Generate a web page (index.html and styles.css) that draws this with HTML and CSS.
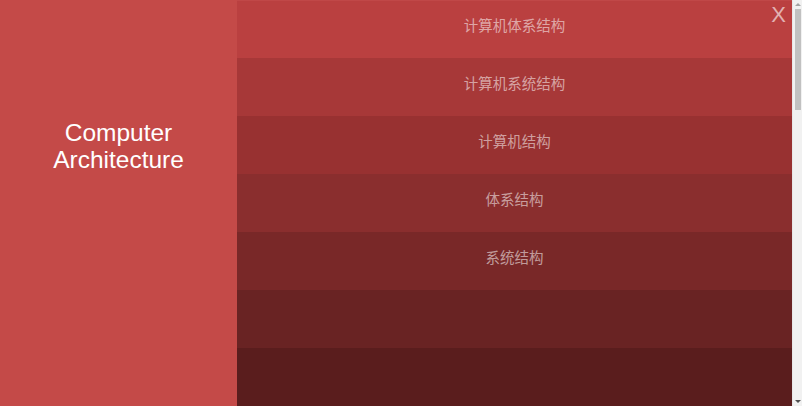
FILE: index.html
```html
<!DOCTYPE html>
<html lang="zh">
<head>
<meta charset="utf-8">
<title>Computer Architecture</title>
<link rel="stylesheet" href="styles.css">
</head>
<body>
<div class="page">
  <aside class="side">
    <h1 class="title">Computer<br>Architecture</h1>
  </aside>
  <main class="list">
    <button class="close">X</button>
    <div class="row r1">计算机体系结构</div>
    <div class="row r2">计算机系统结构</div>
    <div class="row r3">计算机结构</div>
    <div class="row r4">体系结构</div>
    <div class="row r5">系统结构</div>
    <div class="row r6"></div>
    <div class="row r7"></div>
  </main>
  <div class="scrollbar">
    <span class="arrow up"></span>
    <div class="track"><div class="thumb"></div></div>
    <span class="arrow down"></span>
  </div>
</div>
</body>
</html>
```

FILE: styles.css
```css
html, body {
  margin: 0;
  padding: 0;
  overflow: hidden;
}
body {
  font-family: "Liberation Sans", "Noto Sans CJK SC", sans-serif;
  background: #5a1d1d;
}
.page {
  display: flex;
  height: 100vh;
  overflow: hidden;
}
.side {
  width: 237px;
  flex: 0 0 237px;
  background: #c44a48;
  display: flex;
  justify-content: center;
  padding-top: 119px;
  box-sizing: border-box;
}
.title {
  margin: 0;
  color: #ffffff;
  font-weight: normal;
  font-size: 24.5px;
  line-height: 27px;
  text-align: center;
}
.list {
  flex: 1;
  position: relative;
  display: flex;
  flex-direction: column;
  overflow: hidden;
}
.close {
  position: absolute;
  top: 2px;
  right: 6px;
  background: none;
  border: 0;
  padding: 0;
  font-family: "Liberation Sans", sans-serif;
  font-size: 22px;
  line-height: 26px;
  color: rgba(255, 255, 255, 0.6);
  cursor: pointer;
}
.row {
  height: 58px;
  flex: 0 0 58px;
  box-sizing: border-box;
  padding-top: 15px;
  line-height: 20px;
  font-size: 14.5px;
  text-align: center;
  color: rgba(255, 255, 255, 0.55);
  font-family: "Noto Sans CJK SC", "Liberation Sans", sans-serif;
}
.r1 { background: #ba4040; border-top: 1px solid #c04848; padding-top: 14px; }
.r2 { background: #a73838; }
.r3 { background: #983131; }
.r4 { background: #8a2e2e; }
.r5 { background: #792828; }
.r6 { background: #692323; }
.r7 { background: #5a1d1d; flex: 1 0 58px; }
.scrollbar {
  width: 9px;
  flex: 0 0 9px;
  background: #f1f1f1;
  border-left: 1px solid #e8e8e8;
  display: flex;
  flex-direction: column;
  align-items: center;
}
.arrow {
  width: 0;
  height: 0;
  border-left: 3px solid transparent;
  border-right: 3px solid transparent;
  margin: 3px 0;
}
.arrow.up { border-bottom: 3px solid #a3a3a3; }
.arrow.down { border-top: 3px solid #505050; }
.track {
  flex: 1;
  width: 100%;
  display: flex;
  justify-content: center;
}
.thumb {
  width: 6px;
  height: 101px;
  background: #c1c1c1;
}
```
